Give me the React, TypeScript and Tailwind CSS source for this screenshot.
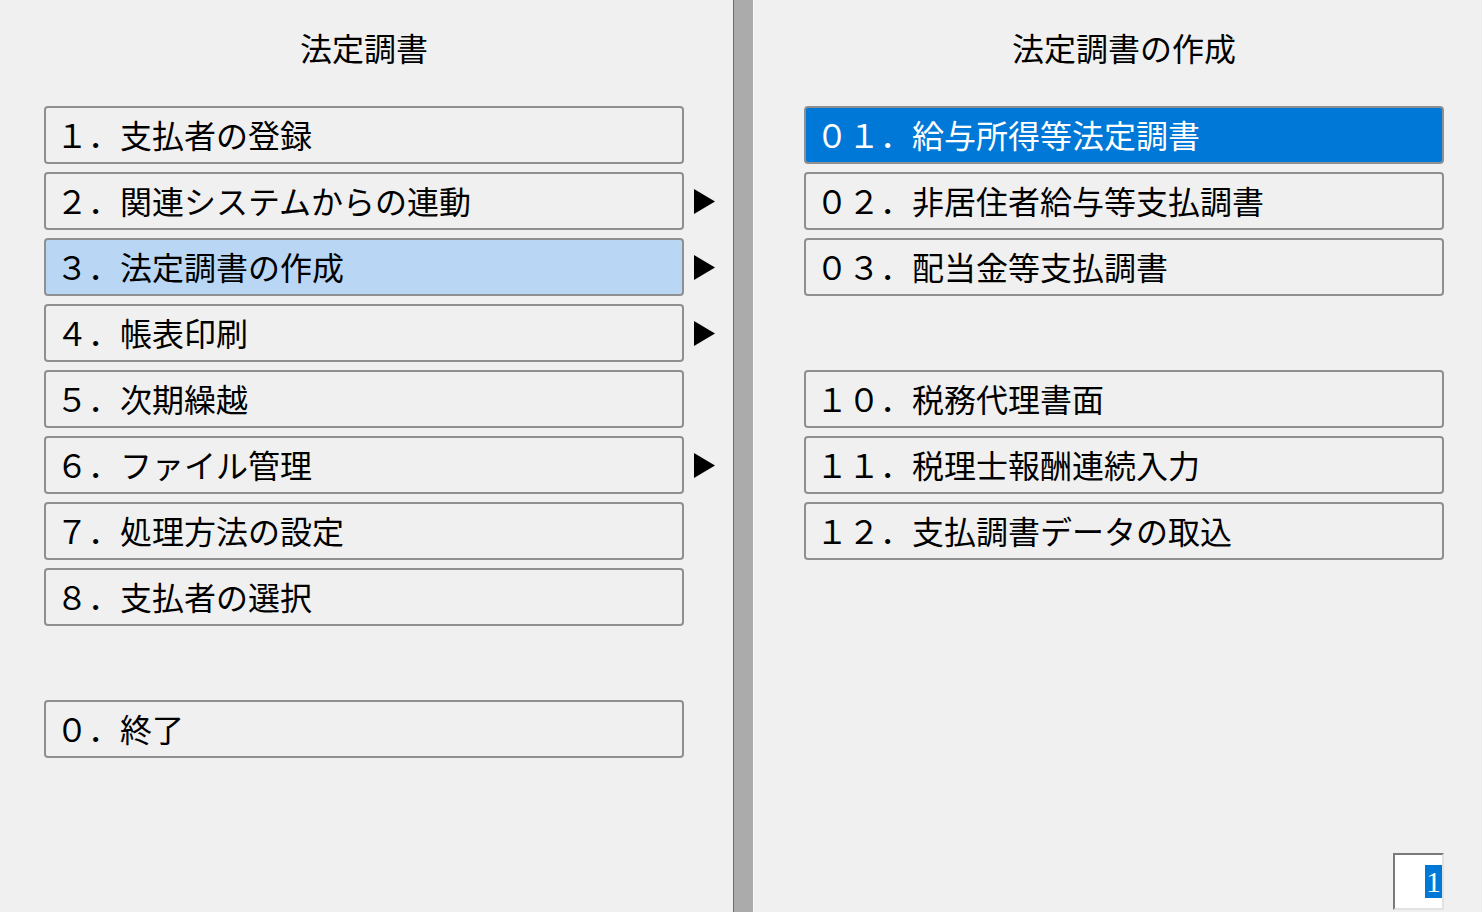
import React from "react";

const font = { fontFamily: '"Noto Sans CJK JP", "Noto Sans", sans-serif' };

type Item = { label: string; sub?: boolean; state?: "light" | "active" } | null;

const leftItems: Item[] = [
  { label: "１．支払者の登録" },
  { label: "２．関連システムからの連動", sub: true },
  { label: "３．法定調書の作成", sub: true, state: "light" },
  { label: "４．帳表印刷", sub: true },
  { label: "５．次期繰越" },
  { label: "６．ファイル管理", sub: true },
  { label: "７．処理方法の設定" },
  { label: "８．支払者の選択" },
  null,
  { label: "０．終了" },
];

const rightItems: Item[] = [
  { label: "０１．給与所得等法定調書", state: "active" },
  { label: "０２．非居住者給与等支払調書" },
  { label: "０３．配当金等支払調書" },
  null,
  { label: "１０．税務代理書面" },
  { label: "１１．税理士報酬連続入力" },
  { label: "１２．支払調書データの取込" },
];

function Arrow() {
  return (
    <svg width="21" height="25" viewBox="0 0 21 25" className="ml-[10px] shrink-0">
      <polygon points="0,0 21,12.5 0,25" fill="#000" />
    </svg>
  );
}

function MenuButton({ item }: { item: Item }) {
  if (!item) return <div className="h-[58px]" />;
  const bg =
    item.state === "active"
      ? "bg-[#0078d7] text-white"
      : item.state === "light"
        ? "bg-[#b9d7f4] text-black"
        : "bg-[#f0f0f0] text-black";
  return (
    <div className="flex items-center h-[58px]">
      <div
        className={`w-[640px] h-[58px] shrink-0 flex items-center pl-[10px] pb-[2px] border-2 border-[#8f8f8f] rounded-[4px] text-[32px] leading-none whitespace-nowrap ${bg}`}
      >
        {item.label}
      </div>
      {item.sub && <Arrow />}
    </div>
  );
}

function Panel({ title, items }: { title: string; items: Item[] }) {
  return (
    <div className="w-[640px] flex flex-col">
      <div className="h-[32px] mt-[31px] text-center text-[32px] leading-[32px] text-black">
        {title}
      </div>
      <div className="mt-[43px] flex flex-col gap-[8px]">
        {items.map((it, i) => (
          <MenuButton key={i} item={it} />
        ))}
      </div>
    </div>
  );
}

export default function App() {
  return (
    <div className="w-[1482px] h-[912px] flex bg-[#f0f0f0] overflow-hidden" style={font}>
      <div className="w-[733px] h-full pl-[44px]">
        <Panel title="法定調書" items={leftItems} />
      </div>

      <div className="w-[21px] h-full border-l border-[#6b6b6b] border-r border-r-[#fafafa] bg-[#ababab]" />

      <div className="flex-1 h-full pl-[50px] flex flex-col">
        <Panel title="法定調書の作成" items={rightItems} />
        <div className="flex-1" />
        <div className="w-[640px] flex justify-end mb-[2px]">
          <div className="w-[51px] h-[57px] bg-white border-2 border-t-[#7a7a7a] border-l-[#7a7a7a] border-b-[#e2e2e2] border-r-[#e2e2e2] flex justify-end items-start pt-[10px]">
            <span
              className="bg-[#0078d7] text-white text-[30px] leading-[33px] px-[1px]"
              style={{ fontFamily: '"Liberation Serif", serif' }}
            >
              1
            </span>
          </div>
        </div>
      </div>
    </div>
  );
}
